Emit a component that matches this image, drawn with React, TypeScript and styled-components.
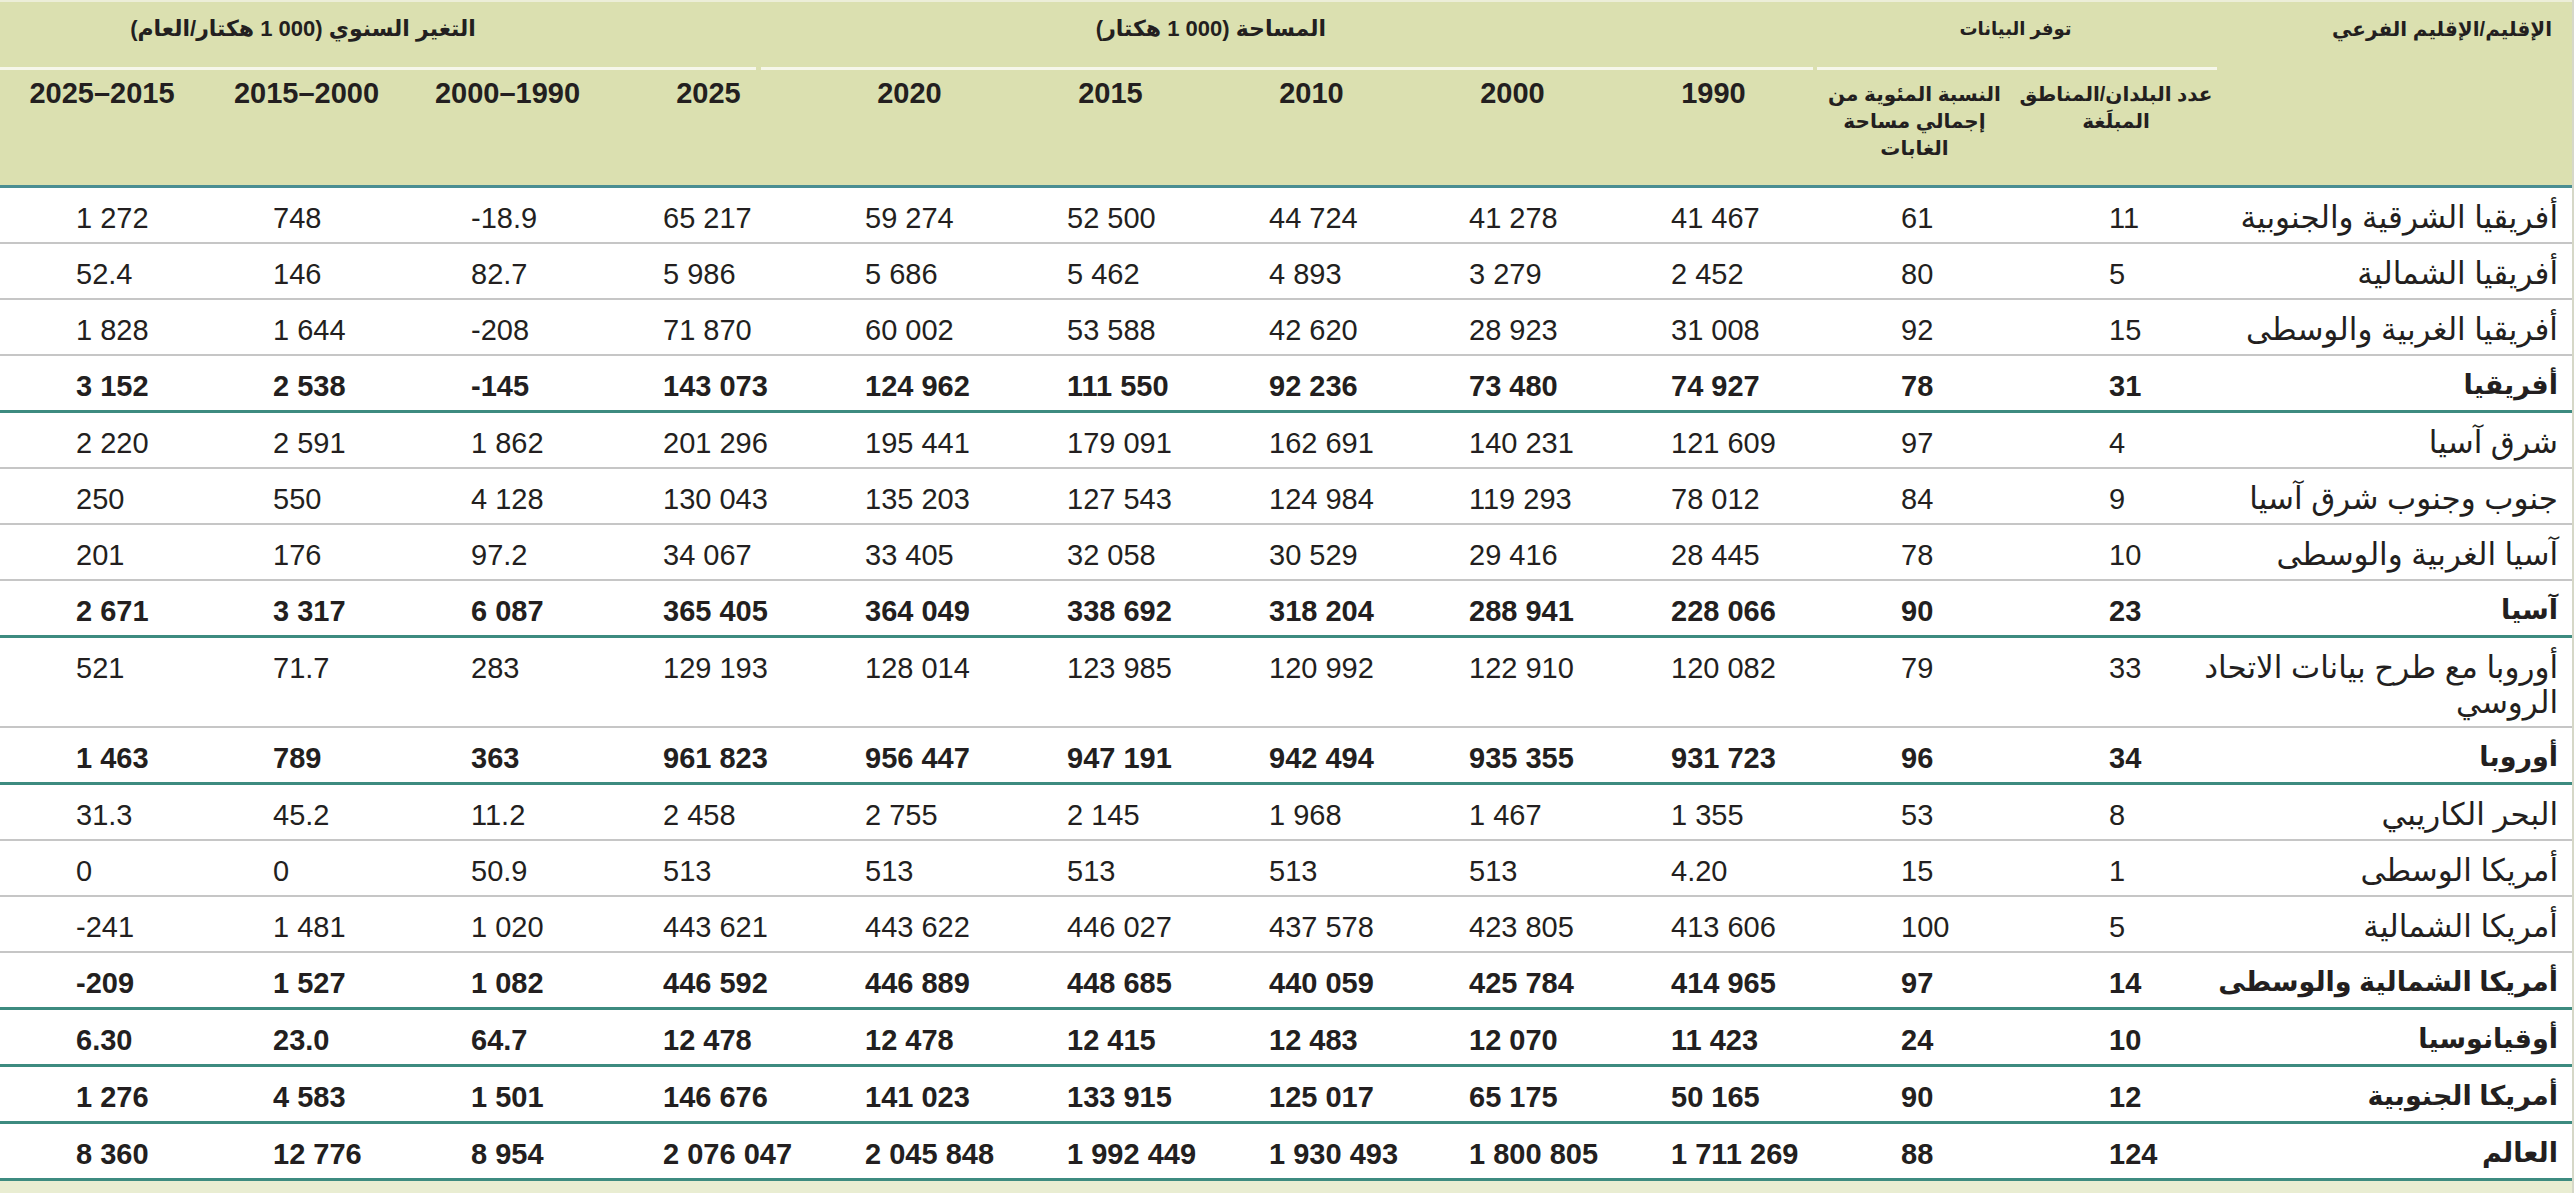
import React from "react"
import styled, { createGlobalStyle } from "styled-components"

const GlobalStyle = createGlobalStyle`
  html, body {
    margin: 0;
    padding: 0;
    background: #ffffff;
  }
  body {
    font-family: "Liberation Sans", "DejaVu Sans", sans-serif;
    color: #231f20;
  }
`

// RTL order: name, count, percent, 1990, 2000, 2010, 2015, 2020, 2025, 1990–2000, 2000–2015, 2015–2025
const COLUMNS = "355px 202px repeat(9, 201px) 208px"
const NUM_PAD = [94, 87, 58, 57, 58, 57, 56, 55, 64, 67, 78]

const Table = styled.div`
  width: 2574px;
  direction: rtl;
  border-right: 2px solid #d6d8c8;
  box-sizing: border-box;
`

const HeaderBand = styled.div`
  background-color: #dbe0b0;
  border-top: 2px solid #eceed8;
  border-bottom: 3px solid #4a8e92;
  height: 183px;
  box-sizing: content-box;
`

const GroupRow = styled.div`
  display: grid;
  grid-template-columns: ${COLUMNS};
  height: 65px;
`

const RegionHead = styled.div`
  padding: 10px 20px 0 0;
  font-size: 20px;
  font-weight: bold;
  line-height: 34px;
  text-align: right;
  white-space: nowrap;
`

const GroupHead = styled.div<{ $span: string; $size?: number }>`
  grid-column: ${(p) => p.$span};
  padding-top: 10px;
  font-size: ${(p) => p.$size || 22}px;
  font-weight: bold;
  line-height: 34px;
  text-align: center;
  white-space: nowrap;
`

const RuleRow = styled.div`
  display: flex;
  height: 3px;
  padding-right: 355px;
`

const Rule = styled.div<{ $w: number; $gap?: number }>`
  width: ${(p) => p.$w}px;
  margin-left: ${(p) => p.$gap || 0}px;
  background-color: #f6f7ea;
`

const SubRow = styled.div`
  display: grid;
  grid-template-columns: ${COLUMNS};
  height: 115px;
`

const SubHead = styled.div`
  padding-top: 11px;
  font-size: 20px;
  font-weight: bold;
  line-height: 27px;
  text-align: center;
  white-space: nowrap;
`

const YearHead = styled(SubHead)`
  padding-top: 10px;
  font-size: 29px;
`

const Row = styled.div<{ $bold?: boolean; $teal?: boolean }>`
  display: grid;
  grid-template-columns: ${COLUMNS};
  font-weight: ${(p) => (p.$bold ? "bold" : "normal")};
  border-bottom: ${(p) => (p.$teal ? "3px solid #3d8b80" : "2px solid #c6c6c6")};
`

const NameCell = styled.div<{ $bold?: boolean }>`
  padding: 12px 14px 6px 0;
  font-size: ${(p) => (p.$bold ? 27 : 31)}px;
  line-height: 35px;
  text-align: right;
  white-space: nowrap;
`

const NumCell = styled.div<{ $pad: number }>`
  direction: ltr;
  text-align: left;
  padding: 13px 0 7px ${(p) => p.$pad}px;
  font-size: 29px;
  line-height: 34px;
  white-space: nowrap;
`

const Footer = styled.div`
  height: 13px;
  background-color: #e9edd2;
`

interface RegionRow {
  name: React.ReactNode
  values: string[]
  bold?: boolean
  teal?: boolean
}

// values in RTL order: count, percent, 1990, 2000, 2010, 2015, 2020, 2025, 1990–2000, 2000–2015, 2015–2025
const rows: RegionRow[] = [
  { name: "أفريقيا الشرقية والجنوبية", values: ["11", "61", "41 467", "41 278", "44 724", "52 500", "59 274", "65 217", "-18.9", "748", "1 272"] },
  { name: "أفريقيا الشمالية", values: ["5", "80", "2 452", "3 279", "4 893", "5 462", "5 686", "5 986", "82.7", "146", "52.4"] },
  { name: "أفريقيا الغربية والوسطى", values: ["15", "92", "31 008", "28 923", "42 620", "53 588", "60 002", "71 870", "-208", "1 644", "1 828"] },
  { name: "أفريقيا", bold: true, teal: true, values: ["31", "78", "74 927", "73 480", "92 236", "111 550", "124 962", "143 073", "-145", "2 538", "3 152"] },
  { name: "شرق آسيا", values: ["4", "97", "121 609", "140 231", "162 691", "179 091", "195 441", "201 296", "1 862", "2 591", "2 220"] },
  { name: "جنوب وجنوب شرق آسيا", values: ["9", "84", "78 012", "119 293", "124 984", "127 543", "135 203", "130 043", "4 128", "550", "250"] },
  { name: "آسيا الغربية والوسطى", values: ["10", "78", "28 445", "29 416", "30 529", "32 058", "33 405", "34 067", "97.2", "176", "201"] },
  { name: "آسيا", bold: true, teal: true, values: ["23", "90", "228 066", "288 941", "318 204", "338 692", "364 049", "365 405", "6 087", "3 317", "2 671"] },
  {
    name: (
      <>
        أوروبا مع طرح بيانات الاتحاد
        <br />
        الروسي
      </>
    ),
    values: ["33", "79", "120 082", "122 910", "120 992", "123 985", "128 014", "129 193", "283", "71.7", "521"],
  },
  { name: "أوروبا", bold: true, teal: true, values: ["34", "96", "931 723", "935 355", "942 494", "947 191", "956 447", "961 823", "363", "789", "1 463"] },
  { name: "البحر الكاريبي", values: ["8", "53", "1 355", "1 467", "1 968", "2 145", "2 755", "2 458", "11.2", "45.2", "31.3"] },
  { name: "أمريكا الوسطى", values: ["1", "15", "4.20", "513", "513", "513", "513", "513", "50.9", "0", "0"] },
  { name: "أمريكا الشمالية", values: ["5", "100", "413 606", "423 805", "437 578", "446 027", "443 622", "443 621", "1 020", "1 481", "-241"] },
  { name: "أمريكا الشمالية والوسطى", bold: true, teal: true, values: ["14", "97", "414 965", "425 784", "440 059", "448 685", "446 889", "446 592", "1 082", "1 527", "-209"] },
  { name: "أوقيانوسيا", bold: true, teal: true, values: ["10", "24", "11 423", "12 070", "12 483", "12 415", "12 478", "12 478", "64.7", "23.0", "6.30"] },
  { name: "أمريكا الجنوبية", bold: true, teal: true, values: ["12", "90", "50 165", "65 175", "125 017", "133 915", "141 023", "146 676", "1 501", "4 583", "1 276"] },
  { name: "العالم", bold: true, teal: true, values: ["124", "88", "1 711 269", "1 800 805", "1 930 493", "1 992 449", "2 045 848", "2 076 047", "8 954", "12 776", "8 360"] },
]

const years = ["1990", "2000", "2010", "2015", "2020", "2025", "1990–2000", "2000–2015", "2015–2025"]

const App = () => {
  return (
    <>
      <GlobalStyle />
      <Table>
        <HeaderBand>
          <GroupRow>
            <RegionHead>الإقليم/الإقليم الفرعي</RegionHead>
            <GroupHead $span="2 / 4" $size={18}>توفر البيانات</GroupHead>
            <GroupHead $span="4 / 10">المساحة (000 1 هكتار)</GroupHead>
            <GroupHead $span="10 / 13">التغير السنوي (000 1 هكتار/العام)</GroupHead>
          </GroupRow>
          <RuleRow>
            <Rule $w={400} $gap={4} />
            <Rule $w={1053} $gap={5} />
            <Rule $w={757} />
          </RuleRow>
          <SubRow>
            <div />
            <SubHead>
              عدد البلدان/المناطق
              <br />
              المبلَغة
            </SubHead>
            <SubHead>
              النسبة المئوية من
              <br />
              إجمالي مساحة
              <br />
              الغابات
            </SubHead>
            {years.map((y) => (
              <YearHead key={y}>{y}</YearHead>
            ))}
          </SubRow>
        </HeaderBand>
        {rows.map((r, i) => (
          <Row key={i} $bold={r.bold} $teal={r.teal}>
            <NameCell $bold={r.bold}>{r.name}</NameCell>
            {r.values.map((v, j) => (
              <NumCell key={j} $pad={NUM_PAD[j]}>
                {v}
              </NumCell>
            ))}
          </Row>
        ))}
        <Footer />
      </Table>
    </>
  )
}

export default App
